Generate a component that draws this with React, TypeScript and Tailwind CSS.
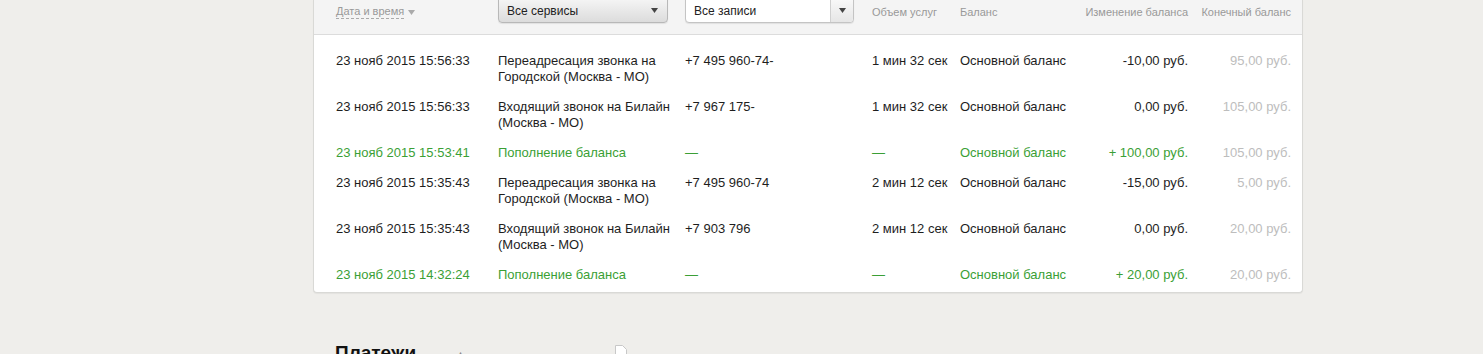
import React from 'react'

type Row = {
  date: string
  service: string
  number: string
  volume: string
  balance: string
  change: string
  final: string
  green?: boolean
}

const rows: Row[] = [
  { date: '23 нояб 2015 15:56:33', service: 'Переадресация звонка на Городской (Москва - МО)', number: '+7 495 960-74-', volume: '1 мин 32 сек', balance: 'Основной баланс', change: '-10,00 руб.', final: '95,00 руб.' },
  { date: '23 нояб 2015 15:56:33', service: 'Входящий звонок на Билайн (Москва - МО)', number: '+7 967 175-', volume: '1 мин 32 сек', balance: 'Основной баланс', change: '0,00 руб.', final: '105,00 руб.' },
  { date: '23 нояб 2015 15:53:41', service: 'Пополнение баланса', number: '—', volume: '—', balance: 'Основной баланс', change: '+ 100,00 руб.', final: '105,00 руб.', green: true },
  { date: '23 нояб 2015 15:35:43', service: 'Переадресация звонка на Городской (Москва - МО)', number: '+7 495 960-74', volume: '2 мин 12 сек', balance: 'Основной баланс', change: '-15,00 руб.', final: '5,00 руб.' },
  { date: '23 нояб 2015 15:35:43', service: 'Входящий звонок на Билайн (Москва - МО)', number: '+7 903 796', volume: '2 мин 12 сек', balance: 'Основной баланс', change: '0,00 руб.', final: '20,00 руб.' },
  { date: '23 нояб 2015 14:32:24', service: 'Пополнение баланса', number: '—', volume: '—', balance: 'Основной баланс', change: '+ 20,00 руб.', final: '20,00 руб.', green: true },
]

const cols = 'grid grid-cols-[162px_187px_187px_88px_121px_107px_103px]'

function Caret({ className = '' }: { className?: string }) {
  return (
    <svg className={className} width="7" height="5" viewBox="0 0 7 5">
      <path d="M0 0h7L3.5 5z" fill="currentColor" />
    </svg>
  )
}

export default function App() {
  return (
    <div className="h-[354px] bg-[#efeeeb] font-['Liberation_Sans',Arial,sans-serif] overflow-hidden">
      <div className="ml-[313px] w-[990px] bg-white border-x border-b border-[#d9d9d6] rounded-b-[4px] shadow-[0_1px_1px_rgba(0,0,0,0.05)]">
        <div className="h-[35px] bg-[#f4f4f4] border-b border-[#dcdcdc] pl-[22px] pr-[12px]">
          <div className={`${cols} items-start`}>
            <div className="pt-[4px] flex items-center gap-[4px] text-[11px] text-[#999]">
              <span className="border-b border-dashed border-[#aaa] leading-[14px]">Дата и время</span>
              <Caret className="text-[#aaa] mt-[1px]" />
            </div>
            <div className="pr-[17px]">
              <div className="mt-[-4px] h-[27px] flex items-center justify-between pl-[8px] pr-[9px] pt-[2px] rounded-b-[4px] border border-[#b8b8b8] bg-gradient-to-b from-[#f7f7f7] to-[#dcdcdc] text-[12px] text-[#222] shadow-[0_1px_1px_rgba(0,0,0,0.08)]">
                <span>Все сервисы</span>
                <Caret className="text-[#444]" />
              </div>
            </div>
            <div className="pr-[18px]">
              <div className="mt-[-4px] h-[27px] flex items-stretch rounded-b-[4px] border border-[#c4c4c4] bg-white text-[12px] text-[#222] shadow-[0_1px_1px_rgba(0,0,0,0.08)]">
                <span className="flex-1 flex items-center pl-[8px] pt-[2px]">Все записи</span>
                <span className="w-[23px] flex items-center justify-center border-l border-[#d0d0d0] bg-gradient-to-b from-[#fafafa] to-[#e6e6e6] rounded-br-[4px] pt-[2px]">
                  <Caret className="text-[#444]" />
                </span>
              </div>
            </div>
            <div className="pt-[5px] text-[11px] text-[#999] leading-[14px]">Объем услуг</div>
            <div className="pt-[5px] text-[11px] text-[#999] leading-[14px]">Баланс</div>
            <div className="pt-[5px] text-[11px] text-[#999] leading-[14px] text-right whitespace-nowrap">Изменение баланса</div>
            <div className="pt-[5px] text-[11px] text-[#999] leading-[14px] text-right whitespace-nowrap">Конечный баланс</div>
          </div>
        </div>
        <div className="pt-[11px] pb-[2px] pl-[22px] pr-[12px]">
          {rows.map((r, i) => {
            const tone = r.green ? 'text-[#3b9f36]' : 'text-[#1e1e1e]'
            return (
              <div key={i} className={`${cols} py-[7px] text-[13px] leading-[16px] ${tone}`}>
                <div className="whitespace-nowrap">{r.date}</div>
                <div>{r.service}</div>
                <div>{r.number}</div>
                <div className="whitespace-nowrap">{r.volume}</div>
                <div className="whitespace-nowrap">{r.balance}</div>
                <div className="text-right whitespace-nowrap">{r.change}</div>
                <div className="text-right whitespace-nowrap text-[#bdbdbd]">{r.final}</div>
              </div>
            )
          })}
        </div>
      </div>
      <div className="ml-[335px] mt-[48px] flex items-start h-[30px]">
        <h2 className="text-[19px] leading-[24px] font-bold text-[#111]">Платежи</h2>
        <span className="ml-[42px] mt-[6px] text-[10px] text-[#555]">↑</span>
        <svg className="ml-[152px] mt-[4px]" width="12" height="14" viewBox="0 0 12 14">
          <path d="M0.5 0.5h7l4 4v9h-11z" fill="#fff" stroke="#c8c8c8" />
        </svg>
      </div>
    </div>
  )
}
